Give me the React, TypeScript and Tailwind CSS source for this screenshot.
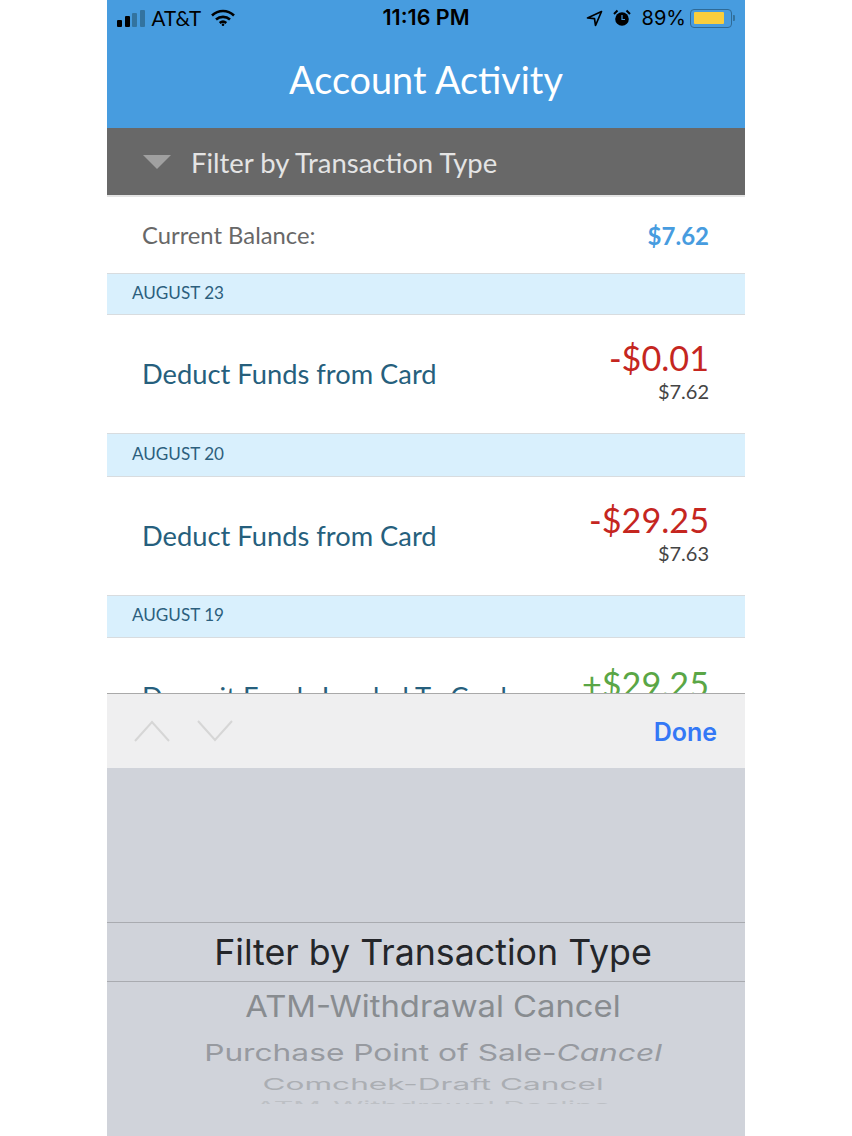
const LATO = "font-['Lato',sans-serif]";
const SF = "font-['Inter','Liberation_Sans',sans-serif]";

function StatusBar() {
  return (
    <div className={`flex h-[36px] items-center justify-between pl-[10px] pr-[10px] text-black ${SF}`}>
      <div className="flex w-[200px] items-center">
        <div className="flex items-end gap-[2.500px]">
          <span className="h-[7px] w-[5px] rounded-[1px] bg-black" />
          <span className="h-[11px] w-[5px] rounded-[1px] bg-black" />
          <span className="h-[14px] w-[5px] rounded-[1px] bg-[#33739f]" />
          <span className="h-[17px] w-[5px] rounded-[1px] bg-[#33739f]" />
        </div>
        <span className={`ml-[7px] text-[20.500px] leading-none ${LATO}`}>AT&amp;T</span>
        <svg className="ml-[10px]" width="24" height="18" viewBox="0 0 24 18" fill="none" stroke="black" strokeWidth="2.6">
          <path d="M1 6.500C7.500 .5 16.500 .5 23 6.500" />
          <path d="M5 10.500C9 7 15 7 19 10.500" />
          <path d="M8.700 14C10.800 12.300 13.200 12.300 15.300 14" />
          <circle cx="12" cy="15.800" r="1.300" fill="black" stroke="none" />
        </svg>
      </div>
      <span className="text-[21.500px] font-semibold leading-none">11:16 PM</span>
      <div className="flex w-[200px] items-center justify-end">
        <svg width="17" height="17" viewBox="0 0 17 17" fill="none" stroke="black" strokeWidth="1.700" strokeLinejoin="round">
          <path d="M15.500 1.500L1.500 8L8.500 8.700L9.500 15.500Z" />
        </svg>
        <svg className="ml-[10px]" width="18" height="18" viewBox="0 0 18 18">
          <circle cx="9" cy="10" r="6.800" fill="black" />
          <path d="M9 6V10.500H12" fill="none" stroke="#479cdf" strokeWidth="1.200" />
          <path d="M1 5L4.500 1.500M17 5L13.500 1.500" stroke="black" strokeWidth="2" />
        </svg>
        <span className="ml-[11px] text-[20px] leading-none">89%</span>
        <div className="ml-[4px] flex h-[19px] w-[42px] items-center rounded-[4px] border-[1.500px] border-[#2f6a96] px-[2.500px]">
          <div className="h-[12px] w-[30px] rounded-[1px] bg-[#f9ce3d]" />
        </div>
        <span className="ml-[1px] h-[6px] w-[2px] rounded-r-[1px] bg-[#33739f]" />
      </div>
    </div>
  );
}

function DateBand({ label, height }: { label: string; height: string }) {
  return (
    <div className={`flex items-center border-y border-[#d8dcdf] bg-[#d9f0fd] pb-[3px] pl-[25px] text-[17.100px] text-[#2c5f7d] ${height} ${LATO}`}>
      {label}
    </div>
  );
}

function Row({ title, amount, balance, color }: { title: string; amount: string; balance?: string; color: string }) {
  return (
    <div className={`flex h-[118px] shrink-0 items-center justify-between pl-[35px] pr-[36px] ${LATO}`}>
      <span className="text-[27.300px] text-[#265f7d]">{title}</span>
      <div className="flex flex-col items-end pb-[5px]">
        <span className={`text-[34.200px] leading-[36px] ${color}`}>{amount}</span>
        <span className="mt-[3px] min-h-[18px] text-[20px] leading-[24px] text-[#444444]">{balance}</span>
      </div>
    </div>
  );
}

export default function App() {
  return (
    <div className="flex h-[1136px] w-[852px] justify-center overflow-hidden bg-white">
      <div className="flex h-full w-[638px] flex-col">
        <div className="h-[128px] shrink-0 bg-[#479cdf]">
          <StatusBar />
          <div className={`h-[92px] text-center text-[37.800px] leading-[88px] text-white ${LATO}`}>Account Activity</div>
        </div>
        <div className={`flex h-[67px] shrink-0 items-center bg-[#686868] pl-[36px] text-[27.450px] text-[#e4e4e4] ${LATO}`}>
          <span className="h-0 w-0 border-x-[14px] border-t-[14px] border-x-transparent border-t-[#a0a0a0]" />
          <span className="ml-[20px] pt-[3px]">Filter by Transaction Type</span>
        </div>

        <div className="h-[498px] shrink-0 overflow-hidden">
          <div className={`flex h-[78px] items-center justify-between border-t-2 border-[#e4e4e4] pl-[35px] pr-[36px] pt-[1px] ${LATO}`}>
            <span className="text-[23.800px] text-[#686868]">Current Balance:</span>
            <span className="text-[24px] font-bold text-[#479cdf]">$7.62</span>
          </div>
          <DateBand label="AUGUST 23" height="h-[42px]" />
          <Row title="Deduct Funds from Card" amount="-$0.01" balance="$7.62" color="text-[#c5261f]" />
          <DateBand label="AUGUST 20" height="h-[44px]" />
          <Row title="Deduct Funds from Card" amount="-$29.25" balance="$7.63" color="text-[#c5261f]" />
          <DateBand label="AUGUST 19" height="h-[43px]" />
          <Row title="Deposit Funds Loaded To Card" amount="+$29.25" color="text-[#5aa646]" />
        </div>

        <div className="flex h-[75px] shrink-0 items-center justify-between border-t border-[#a9a9a9] bg-[#efeff0] pl-[27px] pr-[28px]">
          <div className="flex gap-[27px]">
            <svg width="36" height="22" viewBox="0 0 36 22" fill="none" stroke="#d6d6d6" strokeWidth="2">
              <path d="M1 21L18 2L35 21" />
            </svg>
            <svg width="36" height="22" viewBox="0 0 36 22" fill="none" stroke="#d6d6d6" strokeWidth="2">
              <path d="M1 1L18 20L35 1" />
            </svg>
          </div>
          <span className={`pt-[3px] text-[25px] font-semibold text-[#3478f6] ${SF}`}>Done</span>
        </div>

        <div className={`flex min-h-0 flex-1 flex-col overflow-hidden bg-[#d0d3da] pt-[154px] ${SF}`}>
          <div className="flex h-[60px] w-full shrink-0 items-center justify-center border-y border-[#a9abb0] pl-[14px] pt-[1px] text-[35.750px] text-[#24262a]">
            Filter by Transaction Type
          </div>
          <div className="flex flex-col items-center pl-[14px]">
            <div className="mt-[2px] flex h-[46px] shrink-0 scale-y-[0.92] items-center whitespace-nowrap text-[32.800px] text-[#888c90]">
              ATM-Withdrawal Cancel
            </div>
            <div className="mt-[1px] flex h-[44px] shrink-0 scale-y-[0.74] items-center whitespace-nowrap text-[31.700px] text-[#979aa0]">
              Purchase Point of Sale-<span className="italic">Cancel</span>
            </div>
            <div className="-mt-[6px] flex h-[30px] shrink-0 scale-y-[0.52] items-center whitespace-nowrap text-[31.600px] text-[#abaeb3]">
              Comchek-Draft Cancel
            </div>
            <div className="h-[5px] shrink-0 overflow-hidden">
              <div className="origin-top scale-y-[0.4] whitespace-nowrap text-[30.400px] leading-[32px] text-[#bdc0c5]">
                ATM-Withdrawal Decline
              </div>
            </div>
          </div>
        </div>
      </div>
    </div>
  );
}
